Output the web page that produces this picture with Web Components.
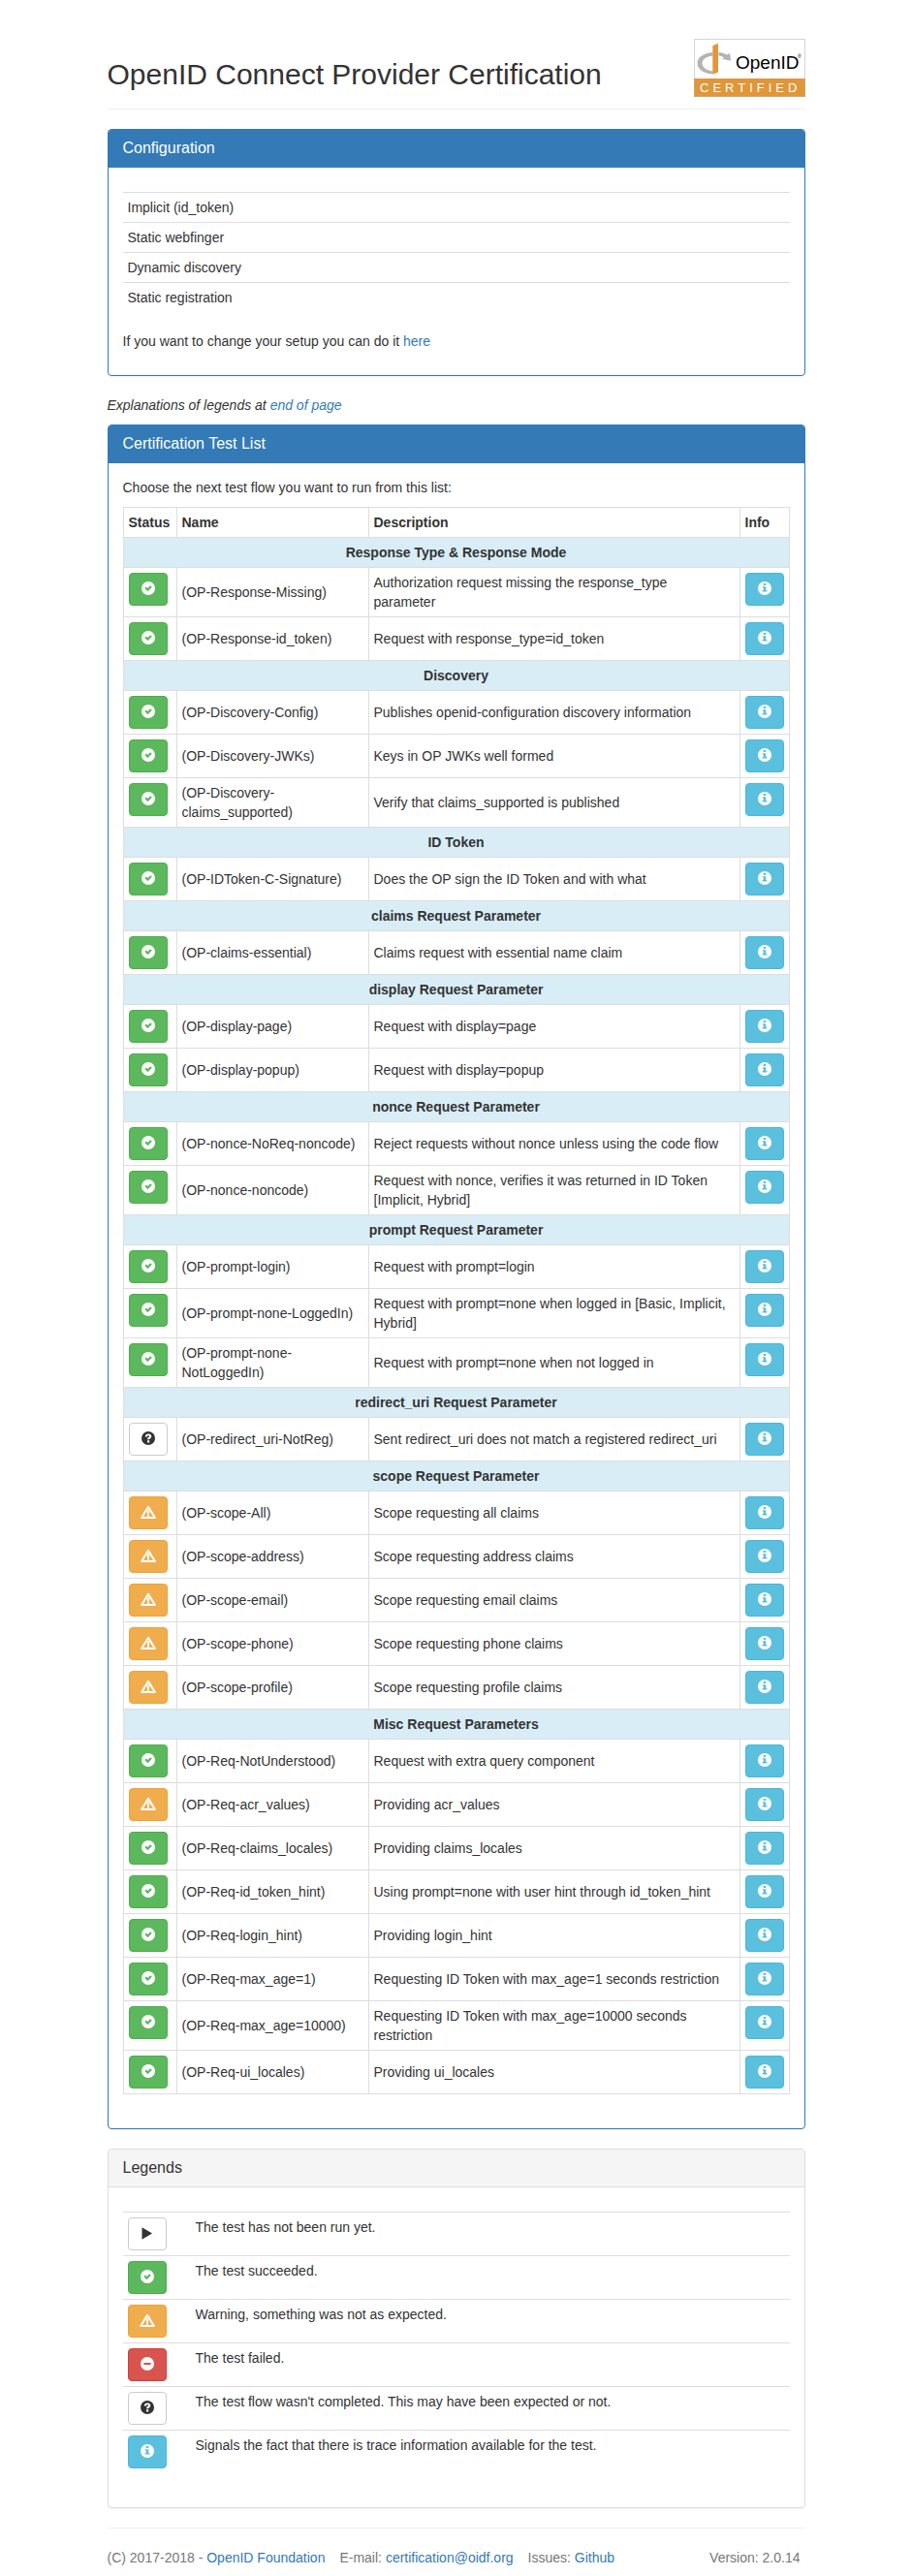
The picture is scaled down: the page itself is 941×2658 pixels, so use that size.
<!DOCTYPE html>
<html lang="en">
<head>
<meta charset="utf-8">
<meta name="viewport" content="width=device-width, initial-scale=1">
<title>OpenID Connect Provider Certification</title>
<style>
  body {
    margin: 0;
    background: #fff;
    color: #333;
    font: 14px/20px "Liberation Sans", Arial, sans-serif;
  }
  main { max-width: 720px; margin: 0 auto; padding: 0 15px; }
  p { margin: 0 0 10px; }
  a { color: #337ab7; text-decoration: none; }
  a:hover { text-decoration: underline; }
</style>
</head>
<body>
<main>
  <page-header>OpenID Connect Provider Certification</page-header>
  <info-panel kind="primary" heading="Configuration">
    <config-table></config-table>
    <p>If you want to change your setup you can do it <a href="#setup">here</a></p>
  </info-panel>
  <p><em>Explanations of legends at <a href="#legends">end of page</a></em></p>
  <info-panel kind="primary" heading="Certification Test List">
    <p>Choose the next test flow you want to run from this list:</p>
    <test-table></test-table>
  </info-panel>
  <info-panel id="legends" heading="Legends">
    <legend-table></legend-table>
  </info-panel>
  <page-footer></page-footer>
</main>

<script>
const define = (name, render) => customElements.define(name, class extends HTMLElement {
  connectedCallback() {
    if (this.shadowRoot) return;
    this.attachShadow({ mode: 'open' }).innerHTML = render(this);
  }
});

const DISC = '<circle cx="7" cy="7" r="7" fill="currentColor"/>';
const ICONS = {
  ok: DISC + '<path class="hole" d="M3.3 7.1L4.9 5.5l1.5 1.5 2.8-2.8 1.6 1.6-4.4 4.4z"/>',
  info: DISC + '<path class="hole" d="M5.7 2h2.6v2.1H5.7zM4.8 5.2h3.5v3.9h1.1v1.4H4.6V9.1h1.1V6.6h-.9z"/>',
  minus: DISC + '<path class="hole" d="M3.3 6h7.4v2.1H3.3z"/>',
  question: DISC + '<path class="hole" d="M3.8 5.5C3.9 3.6 5.1 2.4 7.1 2.4c1.9 0 3.2 1.1 3.2 2.7 0 1.3-.8 1.8-1.5 2.3-.4.3-.6.4-.6.8H6c0-1.3.7-1.8 1.3-2.3.5-.4.8-.5.8-.9s-.4-.8-1-.8c-.7 0-1.1.5-1.1 1.3zM6 9.3h2.2v2.1H6z"/>',
  warning: '<path d="M7 1.9L13.900 13H.1z" fill="none" stroke="currentColor" stroke-width="2" stroke-linejoin="round"/><path d="M5.700 5.500h2.600L7.900 9.700H6.100zM6 10.300h2V13H6z" fill="currentColor"/>',
  play: '<path d="M1.500 1.300v12.400L12 7.500z" fill="currentColor"/>'
};
const STATES = {
  ok: ['Succeeded', '#5cb85c', '#4cae4c', '#fff'],
  info: ['Trace information', '#5bc0de', '#46b8da', '#fff'],
  minus: ['Failed', '#d9534f', '#d43f3a', '#fff'],
  warning: ['Warning', '#f0ad4e', '#eea236', '#fff'],
  question: ['Not completed', '#fff', '#ccc', '#333'],
  play: ['Not run yet', '#fff', '#ccc', '#333']
};

define('icon-button', el => {
  const icon = el.getAttribute('icon');
  const [label, fill, edge, ink] = STATES[icon];
  return `<style>
    :host { display: block; --fill: ${fill}; }
    button {
      display: flex; box-sizing: border-box; width: 40px; height: 34px;
      padding: 8px 12px; align-items: flex-start;
      border: 1px solid ${edge}; border-radius: 4px;
      background: var(--fill); color: ${ink}; cursor: pointer;
    }
    svg { display: block; flex: none; overflow: visible; }
    .hole { fill: var(--fill); }
  </style>
  <button type="button" aria-label="${label}"><svg width="14" height="14" viewBox="0 0 14 14" aria-hidden="true">${ICONS[icon]}</svg></button>`;
});

define('certified-logo', () => `<style>
    :host { display: block; flex: none; }
    svg { display: block; }
    text { font-family: "Liberation Sans", Arial, sans-serif; }
    .word { font-size: 19px; }
    .band { font-size: 13px; letter-spacing: 4px; fill: #fff; }
    .mark { font-size: 5px; }
  </style>
  <svg width="115" height="60" viewBox="0 0 115 60" role="img" aria-label="OpenID Certified">
    <rect x=".5" y=".5" width="114" height="59" fill="#fff" stroke="#d4d4d4"/>
    <path d="M0 41h115v19H0z" fill="#e0973a"/>
    <path d="M.5 41v18.5h114V41" fill="none" stroke="#c9a878"/>
    <path d="M19.300 14C9.500 14.800 3.500 19.500 3.500 25.200c0 6 6.500 10.600 15.800 11.300v-3.200C12.500 32.300 8.500 29.300 8.500 25.200c0-4 4.200-7 10.800-7.800z" fill="#b3b3b3"/>
    <path d="M25.500 14c3.500.3 6.400 1.200 8.900 2.600l2.600-1.500 1.200 7.700-9.500-2 2.600-1.500c-1.500-.8-3.500-1.400-5.800-1.700z" fill="#b3b3b3"/>
    <path d="M19.300 7.200L25 4.700v29.800l-5.700 2.200z" fill="#e0973a"/>
    <text class="word" x="43" y="31">OpenID</text>
    <text class="mark" x="107" y="20">®</text>
    <text class="band" x="6" y="55">CERTIFIED</text>
  </svg>`);

define('page-header', () => `<style>
    :host { display: block; }
    header {
      display: flex; justify-content: space-between; align-items: flex-start; gap: 20px;
      padding: 40px 0 12px; margin-bottom: 20px; border-bottom: 1px solid #eee;
    }
    h1 { margin: 20px 0 0; font-size: 30px; line-height: 33px; font-weight: 400; }
  </style>
  <header><h1><slot></slot></h1><certified-logo></certified-logo></header>`);

define('info-panel', el => {
  const primary = el.getAttribute('kind') === 'primary';
  return `<style>
    :host { display: block; margin-bottom: 20px; --edge: ${primary ? '#337ab7' : '#ddd'}; }
    section { border: 1px solid var(--edge); border-radius: 4px; box-shadow: 0 1px 1px rgba(0,0,0,.05); }
    h2 {
      margin: 0; padding: 10px 15px; font-size: 16px; line-height: 18px; font-weight: 400;
      border-bottom: 1px solid var(--edge); border-radius: 3px 3px 0 0;
      background: ${primary ? '#337ab7' : '#f5f5f5'}; color: ${primary ? '#fff' : '#333'};
    }
    .body { padding: 15px; }
  </style>
  <section><h2>${el.getAttribute('heading')}</h2><div class="body"><slot></slot></div></section>`;
});

define('config-table', () => `<style>
    :host { display: block; margin: 10px 0 20px; }
    table { width: 100%; border-spacing: 0; }
    td { padding: 5px; border-top: 1px solid #ddd; }
  </style>
  <table>${['Implicit (id_token)', 'Static webfinger', 'Dynamic discovery', 'Static registration']
    .map(t => `<tr><td>${t}</td></tr>`).join('')}</table>`);

const TESTS = [
  ['Response Type &amp; Response Mode'],
  ['ok', 'Response-Missing', 'Authorization request missing the response_type parameter'],
  ['ok', 'Response-id_token', 'Request with response_type=id_token'],
  ['Discovery'],
  ['ok', 'Discovery-Config', 'Publishes openid-configuration discovery information'],
  ['ok', 'Discovery-JWKs', 'Keys in OP JWKs well formed'],
  ['ok', 'Discovery-claims_supported', 'Verify that claims_supported is published'],
  ['ID Token'],
  ['ok', 'IDToken-C-Signature', 'Does the OP sign the ID Token and with what'],
  ['claims Request Parameter'],
  ['ok', 'claims-essential', 'Claims request with essential name claim'],
  ['display Request Parameter'],
  ['ok', 'display-page', 'Request with display=page'],
  ['ok', 'display-popup', 'Request with display=popup'],
  ['nonce Request Parameter'],
  ['ok', 'nonce-NoReq-noncode', 'Reject requests without nonce unless using the code flow'],
  ['ok', 'nonce-noncode', 'Request with nonce, verifies it was returned in ID Token [Implicit, Hybrid]'],
  ['prompt Request Parameter'],
  ['ok', 'prompt-login', 'Request with prompt=login'],
  ['ok', 'prompt-none-LoggedIn', 'Request with prompt=none when logged in [Basic, Implicit, Hybrid]'],
  ['ok', 'prompt-none-NotLoggedIn', 'Request with prompt=none when not logged in'],
  ['redirect_uri Request Parameter'],
  ['question', 'redirect_uri-NotReg', 'Sent redirect_uri does not match a registered redirect_uri'],
  ['scope Request Parameter'],
  ['warning', 'scope-All', 'Scope requesting all claims'],
  ['warning', 'scope-address', 'Scope requesting address claims'],
  ['warning', 'scope-email', 'Scope requesting email claims'],
  ['warning', 'scope-phone', 'Scope requesting phone claims'],
  ['warning', 'scope-profile', 'Scope requesting profile claims'],
  ['Misc Request Parameters'],
  ['ok', 'Req-NotUnderstood', 'Request with extra query component'],
  ['warning', 'Req-acr_values', 'Providing acr_values'],
  ['ok', 'Req-claims_locales', 'Providing claims_locales'],
  ['ok', 'Req-id_token_hint', 'Using prompt=none with user hint through id_token_hint'],
  ['ok', 'Req-login_hint', 'Providing login_hint'],
  ['ok', 'Req-max_age=1', 'Requesting ID Token with max_age=1 seconds restriction'],
  ['ok', 'Req-max_age=10000', 'Requesting ID Token with max_age=10000 seconds restriction'],
  ['ok', 'Req-ui_locales', 'Providing ui_locales']
];

define('test-table', () => `<style>
    :host { display: block; margin-bottom: 20px; }
    table { width: 100%; table-layout: fixed; border-collapse: collapse; }
    th, td { padding: 5px; border: 1px solid #ddd; text-align: left; vertical-align: middle; }
    th.group { text-align: center; background: #d9edf7; }
    td.action { vertical-align: top; }
    td.text { padding-right: 10px; }
    .status { width: 44px; }
    .name { width: 187px; }
    .info { width: 40px; }
  </style>
  <table>
    <thead><tr><th class="status">Status</th><th class="name">Name</th><th>Description</th><th class="info">Info</th></tr></thead>
    <tbody>${TESTS.map(([a, name, text]) => name
      ? `<tr><td class="action"><icon-button icon="${a}"></icon-button></td><td>(OP-${name})</td><td class="text">${text}</td><td class="action"><icon-button icon="info"></icon-button></td></tr>`
      : `<tr><th class="group" colspan="4">${a}</th></tr>`).join('')}</tbody>
  </table>`);

define('legend-table', () => `<style>
    :host { display: block; margin: 10px 0 20px; }
    table { width: 100%; border-spacing: 0; table-layout: fixed; }
    td { padding: 5px; border-top: 1px solid #ddd; vertical-align: top; }
    td:first-child { width: 60px; }
  </style>
  <table>${[
    ['play', 'The test has not been run yet.'],
    ['ok', 'The test succeeded.'],
    ['warning', 'Warning, something was not as expected.'],
    ['minus', 'The test failed.'],
    ['question', "The test flow wasn't completed. This may have been expected or not."],
    ['info', 'Signals the fact that there is trace information available for the test.']
  ].map(([i, t]) => `<tr><td><icon-button icon="${i}"></icon-button></td><td>${t}</td></tr>`).join('')}</table>`);

define('page-footer', () => `<style>
    :host { display: block; color: #777; }
    footer { display: flex; flex-wrap: wrap; gap: 0 15px; padding: 20px 5px 0 0; border-top: 1px solid #eee; }
    .version { margin-left: auto; }
    a { color: #337ab7; text-decoration: none; }
    a:hover { text-decoration: underline; }
  </style>
  <footer>
    <span>(C) 2017-2018 - <a href="#foundation">OpenID Foundation</a></span>
    <span>E-mail: <a href="mailto:certification@oidf.org">certification@oidf.org</a></span>
    <span>Issues: <a href="#issues">Github</a></span>
    <span class="version">Version: 2.0.14</span>
  </footer>`);
</script>
</body>
</html>
